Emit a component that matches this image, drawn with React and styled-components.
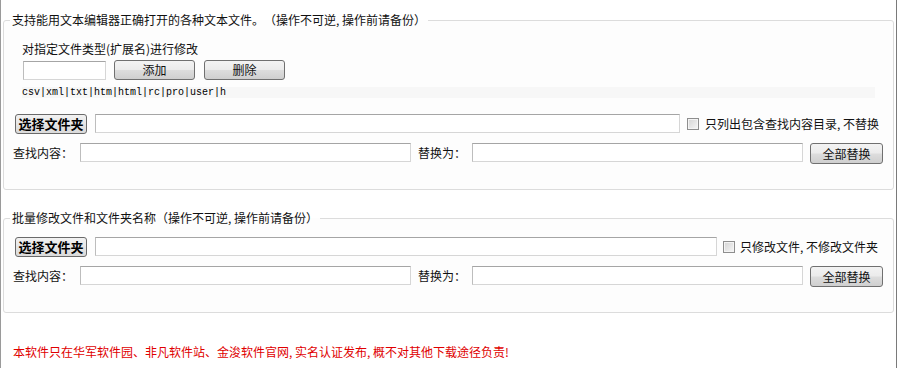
import styled, { createGlobalStyle } from "styled-components"

const Global = createGlobalStyle`
	html, body {
		margin: 0;
		padding: 0;
		background: #fff;
	}
	body {
		font-family: "Noto Sans CJK SC", "Noto Sans", sans-serif;
		font-size: 12px;
		color: #111;
		text-spacing-trim: space-all;
	}
`

const Frame = styled.div`
	box-sizing: border-box;
	width: 897px;
	height: 368px;
	border-left: 1px solid #9a9a9a;
	border-right: 1px solid #7a7a7a;
	padding-top: 12px;
	overflow: hidden;
`

const Group = styled.fieldset`
	margin: ${(p) => (p.$second ? "20px" : "0")} 2px 0 2px;
	padding: ${(p) => (p.$second ? "11px" : "13px")} 8px 25px 6px;
	border: 1px solid #dcdcdc;
	border-radius: 3px;
	background: #fdfdfd;
	min-width: 0;
`

const Legend = styled.legend`
	padding: 0 2px;
	line-height: 16px;
	font-size: 12px;
	color: #111;
`

const TypeBlock = styled.div`
	margin-left: 12px;
	width: 853px;
`

const Caption = styled.div`
	line-height: 16px;
`

const TypeRow = styled.div`
	display: flex;
	align-items: center;
	margin-top: 3px;
	height: 20px;
`

const ExtList = styled.div`
	margin-top: 7px;
	height: 11px;
	line-height: 11px;
	background: #f7f7f7;
	font-family: "Liberation Mono", monospace;
	font-size: 10px;
	color: #000;
	white-space: pre;
`

const Row = styled.div`
	display: flex;
	align-items: flex-start;
	margin-top: ${(p) => p.$gap || 0}px;
	margin-left: 3px;
`

const TextInput = styled.input`
	box-sizing: border-box;
	width: ${(p) => p.$w}px;
	height: 19px;
	margin: 0 0 0 ${(p) => p.$ml || 0}px;
	padding: 0 3px;
	border: 1px solid #d6d6d6;
	border-top-color: #a5a5a5;
	border-left-color: #bdbdbd;
	background: #fff;
	font: 12px "Noto Sans CJK SC", sans-serif;
	outline: none;
`

const Button = styled.button`
	box-sizing: border-box;
	width: ${(p) => p.$w}px;
	height: ${(p) => p.$h || 20}px;
	margin: 0 0 0 ${(p) => p.$ml || 0}px;
	padding: 0;
	border: 1px solid #707070;
	border-radius: 3px;
	background: linear-gradient(#f3f3f3 0%, #ebebeb 48%, #dddddd 52%, #cfcfcf 100%);
	font: 12px "Noto Sans CJK SC", sans-serif;
	color: #111;
	line-height: 18px;
`

const FolderButton = styled.button`
	box-sizing: border-box;
	width: 72px;
	height: 20px;
	margin: 0 0 0 2px;
	padding: 0;
	border: 1px solid #6a6a6a;
	border-radius: 3px;
	background: linear-gradient(#f2f2f2, #dadada);
	font: bold 13px "Noto Sans CJK SC", sans-serif;
	color: #000;
	line-height: 18px;
`

const Check = styled.label`
	display: flex;
	align-items: center;
	height: 19px;
	margin-left: ${(p) => p.$ml}px;
	gap: ${(p) => p.$gap}px;
	white-space: nowrap;
`

const Box = styled.input.attrs({ type: "checkbox" })`
	appearance: none;
	box-sizing: border-box;
	width: 12px;
	height: 12px;
	margin: 0;
	border: 1px solid #8e8e8e;
	background: linear-gradient(135deg, #d4d4d4, #f6f6f6);
	box-shadow: inset 0 0 0 1px #f4f4f4;
`

const Label = styled.span`
	display: inline-block;
	width: ${(p) => p.$w}px;
	margin-left: ${(p) => p.$ml || 0}px;
	line-height: 19px;
	white-space: nowrap;
`

const Notice = styled.div`
	margin: 31px 0 0 12px;
	line-height: 16px;
	color: #e00000;
`

const FindRow = ({ gap }) => (
	<Row $gap={gap}>
		<Label $w={60}>查找内容：</Label>
		<TextInput $w={331} $ml={7} />
		<Label $w={48} $ml={7}>替换为：</Label>
		<TextInput $w={331} $ml={6} />
		<Button $w={73} $h={21} $ml={7}>全部替换</Button>
	</Row>
)

export default function App() {
	return (
		<Frame>
			<Global />
			<Group>
				<Legend>支持能用文本编辑器正确打开的各种文本文件。（操作不可逆, 操作前请备份）</Legend>
				<TypeBlock>
					<Caption>对指定文件类型(扩展名)进行修改</Caption>
					<TypeRow>
						<TextInput $w={83} $ml={1} />
						<Button $w={81} $ml={8}>添加</Button>
						<Button $w={81} $ml={9}>删除</Button>
					</TypeRow>
					<ExtList>csv|xml|txt|htm|html|rc|pro|user|h</ExtList>
				</TypeBlock>
				<Row $gap={16}>
					<FolderButton>选择文件夹</FolderButton>
					<TextInput $w={585} $ml={8} />
					<Check $ml={7} $gap={6}>
						<Box />
						<span>只列出包含查找内容目录, 不替换</span>
					</Check>
				</Row>
				<FindRow gap={9} />
			</Group>
			<Group $second>
				<Legend>批量修改文件和文件夹名称（操作不可逆, 操作前请备份）</Legend>
				<Row>
					<FolderButton>选择文件夹</FolderButton>
					<TextInput $w={622} $ml={8} />
					<Check $ml={6} $gap={5}>
						<Box />
						<span>只修改文件, 不修改文件夹</span>
					</Check>
				</Row>
				<FindRow gap={9} />
			</Group>
			<Notice>本软件只在华军软件园、非凡软件站、金浚软件官网, 实名认证发布, 概不对其他下载途径负责!</Notice>
		</Frame>
	)
}
